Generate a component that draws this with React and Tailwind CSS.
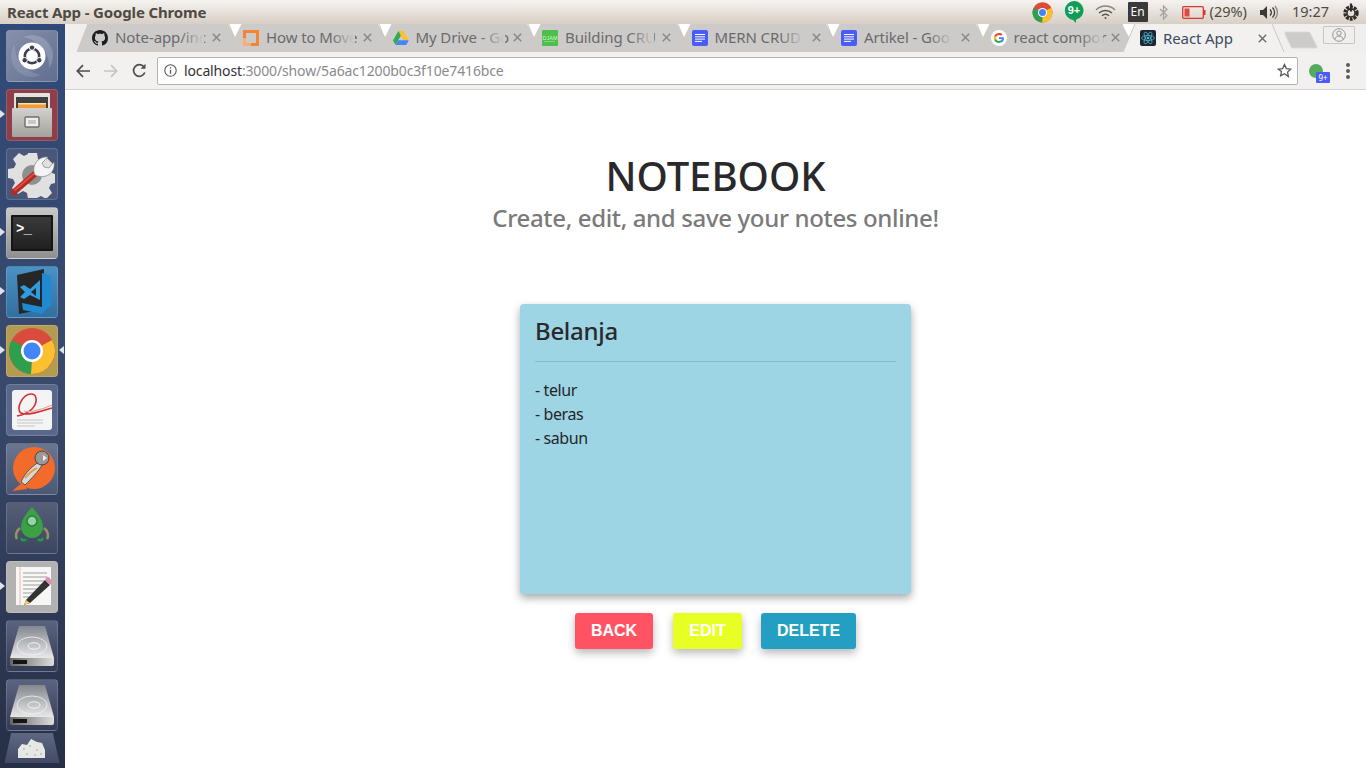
import React from "react";

const UI_FONT = "font-['Noto_Sans','Open_Sans',sans-serif]";

const GithubIcon = () => (
  <svg width="16" height="16" viewBox="0 0 16 16" fill="#1b1f23">
    <path d="M8 0C3.58 0 0 3.58 0 8c0 3.54 2.29 6.53 5.47 7.59.4.07.55-.17.55-.38 0-.19-.01-.82-.01-1.49-2.01.37-2.53-.49-2.69-.94-.09-.23-.48-.94-.82-1.13-.28-.15-.68-.52-.01-.53.63-.01 1.08.58 1.23.82.72 1.21 1.87.87 2.33.66.07-.52.28-.87.51-1.07-1.78-.2-3.64-.89-3.64-3.95 0-.87.31-1.59.82-2.15-.08-.2-.36-1.02.08-2.12 0 0 .67-.21 2.2.82.64-.18 1.32-.27 2-.27s1.36.09 2 .27c1.53-1.04 2.2-.82 2.2-.82.44 1.1.16 1.92.08 2.12.51.56.82 1.27.82 2.15 0 3.07-1.87 3.75-3.65 3.95.29.25.54.73.54 1.48 0 1.07-.01 1.93-.01 2.2 0 .21.15.46.55.38A8.01 8.01 0 0 0 16 8c0-4.42-3.58-8-8-8z" />
  </svg>
);

const OrangeIcon = () => (
  <svg width="16" height="16" viewBox="0 0 16 16">
    <rect width="16" height="16" fill="#f58536" />
    <rect x="3" y="3" width="10" height="10" fill="#cdcbc9" />
    <rect x="0" y="8" width="3" height="8" fill="#f8ae76" />
    <rect x="0" y="13" width="8" height="3" fill="#f8ae76" />
  </svg>
);

const DriveIcon = () => (
  <svg width="16" height="16" viewBox="0 0 16 16">
    <path d="M5.4 1h5.2l5.2 9.2h-5.2z" fill="#fbc02d" />
    <path d="M5.4 1 0 10.4l2.6 4.5 5.3-9.4z" fill="#34a853" />
    <path d="M2.6 14.9h10.6l2.6-4.7H5.3z" fill="#4285f4" />
  </svg>
);

const DjamIcon = () => (
  <svg width="16" height="16" viewBox="0 0 16 16">
    <rect width="16" height="16" rx="1" fill="#4cc04a" />
    <text x="8" y="9.5" textAnchor="middle" fontSize="5.5" fill="#d5f5c8" fontFamily="Liberation Sans, sans-serif">DJAM</text>
    <path d="M2 12h1l1-1 1 1 1-1 1 1 1-1 1 1 1-1 1 1 1-1 1 1" stroke="#9fe8a0" strokeWidth=".6" fill="none" />
  </svg>
);

const DocsIcon = () => (
  <svg width="16" height="16" viewBox="0 0 16 16">
    <rect width="16" height="16" rx="2" fill="#4a5cf7" />
    <path d="M3 4.5h10M3 6.8h10M3 9.1h10M3 11.4h7" stroke="#fff" strokeWidth="1" />
  </svg>
);

const GoogleIcon = () => (
  <svg width="16" height="16" viewBox="0 0 16 16">
    <circle cx="8" cy="8" r="8" fill="#fff" />
    <path d="M12.9 8.2c0-.4 0-.7-.1-1H8v1.9h2.8c-.1.6-.5 1.2-1 1.5v1.3h1.6c1-.9 1.5-2.2 1.5-3.7z" fill="#4285f4" />
    <path d="M8 13c1.4 0 2.5-.5 3.4-1.2l-1.6-1.3c-.5.3-1 .5-1.8.5-1.3 0-2.5-.9-2.9-2.1H3.4v1.3C4.2 11.9 6 13 8 13z" fill="#34a853" />
    <path d="M5.1 8.9c-.2-.6-.2-1.2 0-1.8V5.800H3.4c-.7 1.4-.7 3 0 4.4z" fill="#fbbc05" />
    <path d="M8 5c.8 0 1.5.3 2 .8l1.5-1.5C10.6 3.500 9.4 3 8 3 6 3 4.200 4.100 3.400 5.800l1.700 1.300C5.500 5.900 6.700 5 8 5z" fill="#ea4335" />
  </svg>
);

const ReactIcon = () => (
  <svg width="16" height="16" viewBox="0 0 16 16">
    <rect width="16" height="16" rx="2" fill="#1c2530" />
    <g stroke="#53c1de" strokeWidth=".7" fill="none">
      <ellipse cx="8" cy="8" rx="6.5" ry="2.5" />
      <ellipse cx="8" cy="8" rx="6.5" ry="2.5" transform="rotate(60 8 8)" />
      <ellipse cx="8" cy="8" rx="6.5" ry="2.5" transform="rotate(120 8 8)" />
    </g>
    <circle cx="8" cy="8" r="1.3" fill="#53c1de" />
  </svg>
);

// titles are written as far as the reference shows them, the rest fades out
const TABS = [
  { title: "Note-app/inc", icon: <GithubIcon />, first: true },
  { title: "How to Move", icon: <OrangeIcon /> },
  { title: "My Drive - Go", icon: <DriveIcon /> },
  { title: "Building CRU", icon: <DjamIcon /> },
  { title: "MERN CRUD", icon: <DocsIcon /> },
  { title: "Artikel - Goo", icon: <DocsIcon /> },
  { title: "react compor", icon: <GoogleIcon /> },
];

const CloseX = ({ color }) => (
  <svg className="ml-[8px] shrink-0" width="9" height="9" viewBox="0 0 9 9" stroke={color} strokeWidth="1.5">
    <path d="M.8.8l7.4 7.4M8.2.8.8 8.2" />
  </svg>
);

const TabNotch = () => (
  <svg className="absolute left-[-10px] top-0" width="14" height="28" viewBox="0 0 14 28">
    <path d="M0 0h13.5L7 13z" fill="#fff" />
    <path d="M1 0 12 27.5M7 13l5 14.5" stroke="#d3c8bb" fill="none" />
  </svg>
);

const Tab = ({ title, icon, first }) => (
  <div className={`relative shrink-0 h-[28px] bg-[#cdcbc9] border-b border-[#d3c8bb] flex items-center ${first ? "w-[151px]" : "w-[149.5px]"}`}>
    {first ? (
      <svg className="absolute left-[-10px] top-0" width="12" height="28" viewBox="0 0 12 28">
        <path d="M11 0 0 28h12V0z" fill="#cdcbc9" />
        <path d="M11 0 0 28" stroke="#d3c8bb" fill="none" />
      </svg>
    ) : (
      <TabNotch />
    )}
    <div className="ml-[5px] w-4 h-4 shrink-0 flex">{icon}</div>
    <div className="relative ml-[7px] w-[89px] whitespace-nowrap text-[15px] tracking-[-0.1px] text-[#6a6a6c]">
      {title}
      <div className="absolute right-0 top-0 bottom-0 w-[24px] bg-gradient-to-r from-[#cdcbc900] to-[#cdcbc9]" />
    </div>
    <CloseX color="#88888a" />
  </div>
);

const TitleBar = () => (
  <div className="h-[24px] shrink-0 flex items-center bg-gradient-to-b from-[#f5f3f1] to-[#d8cfc5]">
    <span className="ml-[7px] text-[15px] font-bold text-[#4f4a44] tracking-[-0.15px]">React App - Google Chrome</span>
    <div className="ml-auto flex items-center">
      <svg className="mr-[11px]" width="21" height="21" viewBox="0 0 48 48">
        <circle cx="24" cy="24" r="23" fill="#dd4b39" />
        <path d="M24 24 44 13a23 23 0 0 1-21 34z" fill="#fbc02d" />
        <path d="M24 24 23 47A23 23 0 0 1 4 13z" fill="#2e9e4f" />
        <path d="M24 1a23 23 0 0 1 20 12H24L4 13A23 23 0 0 1 24 1z" fill="#dd4b39" />
        <circle cx="24" cy="24" r="10.5" fill="#fff" />
        <circle cx="24" cy="24" r="8" fill="#4285f4" />
      </svg>
      <svg className="mr-[11px]" width="20" height="24" viewBox="0 0 20 24">
        <path d="M10 1a9.5 9.5 0 0 1 2 18.8V23l-3-3.1A9.5 9.5 0 0 1 10 1z" fill="#0f9d58" />
        <text x="10" y="14" textAnchor="middle" fontSize="11" fontWeight="700" fill="#fff" fontFamily="Liberation Sans, sans-serif">9+</text>
      </svg>
      <svg className="mr-[12px]" width="21" height="15" viewBox="0 0 21 15" fill="none" stroke="#55514c" strokeWidth="1.5">
        <path d="M1 5a13.5 13.5 0 0 1 19 0" stroke="#8b8680" />
        <path d="M4 8a9.5 9.5 0 0 1 13 0" />
        <path d="M7 10.8a5 5 0 0 1 7 0" />
        <circle cx="10.5" cy="13" r="1" fill="#55514c" stroke="none" />
      </svg>
      <div className="w-[20px] h-[20px] mr-[11px] bg-[#3a3a3a] text-white text-[12px] leading-[20px] text-center rounded-[1px]">En</div>
      <svg className="mr-[14px]" width="9" height="15" viewBox="0 0 9 15" fill="none" stroke="#a5a19c" strokeWidth="1.2">
        <path d="M1 4l7 6.5-3.5 3.5V1L8 4.5 1 11" />
      </svg>
      <svg className="mr-[4px]" width="24" height="13" viewBox="0 0 24 13">
        <rect x=".7" y=".7" width="20.6" height="11.6" rx="1" fill="none" stroke="#d9362c" strokeWidth="1.3" />
        <rect x="2.5" y="2.5" width="5" height="8" fill="#e2473b" />
        <rect x="21.5" y="4" width="2" height="5" fill="#d9362c" />
      </svg>
      <span className="text-[14.5px] text-[#4f4a44] mr-[12px]">(29%)</span>
      <svg className="mr-[13px]" width="20" height="15" viewBox="0 0 20 15" fill="none" stroke="#3c3833" strokeWidth="1.3">
        <path d="M1 5h3l4-4v13l-4-4H1z" fill="#3c3833" stroke="none" />
        <path d="M11 4.5a4 4 0 0 1 0 6" />
        <path d="M13.5 2.5a7 7 0 0 1 0 10" />
        <path d="M16 1a10 10 0 0 1 0 13" stroke="#8b8680" />
      </svg>
      <span className="text-[14.5px] text-[#4f4a44] mr-[13px]">19:27</span>
      <svg className="mr-[6px]" width="18" height="18" viewBox="0 0 18 18" fill="none" stroke="#2f2b27">
        <circle cx="9" cy="10" r="6" strokeDasharray="2.8 1" strokeWidth="3.4" />
        <circle cx="9" cy="10" r="4" strokeWidth="1.4" />
        <path d="M9 .5v8" strokeWidth="2.2" />
      </svg>
    </div>
  </div>
);

const TabStrip = () => (
  <div className="h-[28px] shrink-0 flex bg-[#f1efed]">
    <div className="w-[22px] shrink-0" />
    {TABS.map((t) => (
      <Tab key={t.title} {...t} />
    ))}
    <div className="relative w-[137px] shrink-0 h-[28px] bg-[#f2f1ef] flex items-center">
      <svg className="absolute left-[-12px] top-0" width="13" height="28" viewBox="0 0 13 28">
        <path d="M-1 0h13.5L6 13z" fill="#fff" />
        <path d="M12 0 0 28h13V0z" fill="#f2f1ef" />
        <path d="M12 0 0 28" stroke="#d3c8bb" fill="none" />
      </svg>
      <div className="ml-[5px] w-4 h-4 shrink-0 flex"><ReactIcon /></div>
      <div className="ml-[7px] w-[87px] whitespace-nowrap text-[15px] tracking-[-0.1px] text-[#3d4b63]">React App</div>
      <CloseX color="#6f6f70" />
      <svg className="absolute right-[-13px] top-0" width="14" height="28" viewBox="0 0 14 28">
        <path d="M0 0h1l12 28H0z" fill="#f2f1ef" />
        <path d="M1 0 13 28" stroke="#d3c8bb" fill="none" />
      </svg>
    </div>
    <div className="ml-[11px] mt-[7px] flex">
      <svg width="35" height="18" viewBox="0 0 35 18">
        <path d="M3 1h22c1 0 2 .5 2.5 1.500L34 16c.3.7 0 1-.7 1H10c-1 0-1.500-.3-2-1L2 3c-.4-1 0-2 1-2z" fill="#cdcbc9" stroke="#dcd9d5" />
      </svg>
      <div className="ml-[5px] mt-[-5px] w-[32px] h-[18px] border border-[#c9c5c0] rounded-[1px] flex items-center justify-center">
        <svg width="14" height="14" viewBox="0 0 14 14" fill="none" stroke="#8d8a86" strokeWidth="0.9">
          <circle cx="7" cy="7" r="6.3" />
          <circle cx="7" cy="5.2" r="2.2" />
          <path d="M2.8 11.5c.5-2.6 2-3.3 4.2-3.3s3.700.7 4.200 3.300" />
        </svg>
      </div>
    </div>
  </div>
);

const Toolbar = () => (
  <div className="h-[38px] shrink-0 flex items-center bg-[#f2f1ef] border-b border-[#d5d3d1]">
    <svg className="ml-[11px]" width="14" height="14" viewBox="0 0 14 14" fill="none" stroke="#4e4e50" strokeWidth="1.7">
      <path d="M14 7H1.5M7 1.2 1.3 7 7 12.8" />
    </svg>
    <svg className="ml-[14px]" width="14" height="14" viewBox="0 0 14 14" fill="none" stroke="#c4c4c4" strokeWidth="1.7">
      <path d="M0 7h12.5M7 1.2 12.7 7 7 12.8" />
    </svg>
    <svg className="ml-[14px]" width="15" height="15" viewBox="0 0 15 15" fill="none" stroke="#4e4e50" strokeWidth="1.7">
      <path d="M12.8 9.5A5.8 5.8 0 1 1 12 4" />
      <path d="M13.5 .8v5h-5z" fill="#4e4e50" stroke="none" />
    </svg>
    <div className="ml-[10px] w-[1141px] h-[28px] bg-white border border-[#b5b3b1] rounded-[2px] flex items-center">
      <svg className="ml-[6px]" width="13" height="13" viewBox="0 0 13 13" fill="none" stroke="#5a5a5c" strokeWidth="1.1">
        <circle cx="6.5" cy="6.5" r="5.7" />
        <path d="M6.5 5.7v4M6.5 3.2v1.4" strokeWidth="1.3" />
      </svg>
      <span className="ml-[7px] text-[14px] tracking-[-0.14px] text-[#333]">
        localhost<span className="text-[#8a8a8a]">:3000/show/5a6ac1200b0c3f10e7416bce</span>
      </span>
      <svg className="ml-auto mr-[5px]" width="15" height="15" viewBox="0 0 24 24" fill="none" stroke="#555" strokeWidth="2">
        <path d="m12 2.5 3 6.4 7 .9-5.1 4.8 1.3 7L12 17.2l-6.2 3.4 1.3-7L2 9.8l7-.9z" />
      </svg>
    </div>
    <div className="relative ml-[11px] w-[14px] h-[14px] rounded-full bg-[#55ab5d]">
      <div className="absolute left-[7px] top-[8px] w-[14px] h-[11px] bg-[#4a5cf7] text-white text-[8px] leading-[11px] text-center rounded-[1px]">9+</div>
    </div>
    <div className="ml-[23px] flex flex-col gap-[2px]">
      <div className="w-1 h-1 rounded-full bg-[#5a5a5c]" />
      <div className="w-1 h-1 rounded-full bg-[#5a5a5c]" />
      <div className="w-1 h-1 rounded-full bg-[#5a5a5c]" />
    </div>
  </div>
);

const Tile = ({ bg, pip, pipRight, children }) => (
  <div className={`relative w-[52px] h-[52px] shrink-0 rounded-[4px] border border-white/15 flex items-center justify-center ${bg}`}>
    {pip && (
      <div className="absolute left-[-7px] top-[20px] w-0 h-0 border-y-[4px] border-y-transparent border-l-[5px] border-l-[#dfe3ea]" />
    )}
    {pipRight && (
      <div className="absolute right-[-7px] top-[20px] w-0 h-0 border-y-[4px] border-y-transparent border-r-[5px] border-r-[#dfe3ea]" />
    )}
    {children}
  </div>
);

const DiskIcon = ({ id }) => (
  <svg width="48" height="42" viewBox="0 0 48 42">
    <defs>
      <linearGradient id={`top-${id}`} x1="0" y1="0" x2="0" y2="1">
        <stop offset="0" stopColor="#84878f" />
        <stop offset="1" stopColor="#e8e8e8" />
      </linearGradient>
      <linearGradient id={`front-${id}`} x1="0" y1="0" x2="1" y2="0">
        <stop offset="0" stopColor="#666" />
        <stop offset="1" stopColor="#dedede" />
      </linearGradient>
    </defs>
    <path d="M11 1h26l9 32H2z" fill={`url(#top-${id})`} />
    <path d="M2 33h44v6a2 2 0 0 1-2 2H4a2 2 0 0 1-2-2z" fill={`url(#front-${id})`} />
    <rect x="5" y="35" width="14" height="4" fill="#141414" />
    <ellipse cx="24" cy="21" rx="15" ry="9" fill="none" stroke="#f4f4f4" strokeWidth=".8" />
    <ellipse cx="26" cy="21" rx="6" ry="3.2" fill="none" stroke="#f4f4f4" />
  </svg>
);

const Launcher = () => (
  <div className="w-[65px] shrink-0 bg-gradient-to-b from-[#2f4a78] via-[#39496b] to-[#262f46] flex flex-col items-center pr-[1px] pt-[6px] gap-[7px] overflow-hidden">
    <Tile bg="bg-gradient-to-br from-[#8791ab] to-[#626e90]">
      <svg width="46" height="46" viewBox="0 0 46 46">
        <path d="M23 2a21 21 0 0 1 21 21c0 5-2 9-4 12 1-15-8-27-26-31 3-1 6-2 9-2z" fill="#fff" fillOpacity=".18" />
        <path d="M23 44A21 21 0 0 1 2 23c0-5 2-9 4-12-1 15 8 27 26 31-3 1-6 2-9 2z" fill="#fff" fillOpacity=".12" />
        <circle cx="23" cy="23" r="13.5" fill="#fff" />
        <circle cx="23" cy="23" r="7.2" fill="none" stroke="#3a3f50" strokeWidth="2.6" />
        <circle cx="23" cy="14.6" r="2.7" fill="#3a3f50" stroke="#fff" />
        <circle cx="15.7" cy="27.2" r="2.7" fill="#3a3f50" stroke="#fff" />
        <circle cx="30.3" cy="27.2" r="2.7" fill="#3a3f50" stroke="#fff" />
      </svg>
    </Tile>
    <Tile pip bg="bg-[#8f3f4a]">
      <svg width="44" height="46" viewBox="0 0 44 46">
        <defs>
          <linearGradient id="cabinet" x1="0" y1="0" x2="0" y2="1">
            <stop offset="0" stopColor="#d2d1cd" />
            <stop offset="1" stopColor="#a3a29e" />
          </linearGradient>
        </defs>
        <rect x="4" y="1" width="36" height="20" rx="1" fill="#e2e2de" />
        <rect x="6" y="5" width="32" height="13" fill="#3f3f3f" />
        <rect x="8" y="11" width="28" height="5" fill="#ef9a3d" />
        <rect x="8" y="11" width="28" height="1.5" fill="#fbe0a8" />
        <rect x="2" y="16" width="40" height="29" rx="1" fill="url(#cabinet)" />
        <rect x="15" y="25" width="14" height="10" rx="1" fill="#eee" stroke="#6f6f6f" strokeWidth="1.4" />
        <rect x="18" y="28" width="8" height="4" fill="#c8c8c8" />
      </svg>
    </Tile>
    <Tile bg="bg-[#49587a]">
      <svg width="48" height="48" viewBox="0 0 48 48">
        <path d="M20 3h9l1 6 4 2 5-3 6 6-3 5 2 4 3 1v9l-4 1-2 4 3 5-6 6-5-3-4 2-1 1H20l-1-6-4-2-5 3-6-6 3-5-2-4-5-1v-9l6-1 2-4-3-5 6-6 5 3 4-2z" fill="#e0e0e0" />
        <circle cx="24" cy="25" r="10" fill="#8f8f8f" />
        <path d="M6 42 28 23" stroke="#b52a22" strokeWidth="6" strokeLinecap="round" />
        <path d="M7 40 28 22" stroke="#de4f42" strokeWidth="1.8" strokeLinecap="round" />
        <path d="M27 25c-4-8 2-19 13-18l-6 6 2 4 5 1 5-6c2 11-9 18-19 13z" fill="#f4f4f4" stroke="#7f7f7f" strokeWidth=".7" />
      </svg>
    </Tile>
    <Tile pip bg="bg-gradient-to-b from-[#c8c8c8] to-[#8f8f8f]">
      <div className="w-[42px] h-[36px] bg-gradient-to-b from-[#3a3a3a] to-[#202020] border-2 border-[#151515] rounded-[1px] relative">
        <span className="absolute left-[3px] top-[2px] text-[14px] leading-[20px] text-white font-['Liberation_Mono',monospace] font-bold tracking-[-1px]">&gt;_</span>
      </div>
    </Tile>
    <Tile pip bg="bg-gradient-to-b from-[#4a91c4] to-[#336f9f]">
      <svg width="42" height="48" viewBox="0 0 42 48">
        <path d="M6 7 33 1v40L8 46z" fill="#262626" />
        <path d="M31 5l9 3v30l-9 4z" fill="#1f8ad2" />
        <path d="M11 35 36 40 31 46 12 42z" fill="#1f8ad2" />
        <path d="M29 12 19 21l-6-4-4 2 5 5-5 5 4 2 6-4 10 5z" fill="#2f9be0" />
        <path d="m25 20-5 4 5 4z" fill="#262626" />
      </svg>
    </Tile>
    <Tile pip pipRight bg="bg-[#b39c52]">
      <svg width="48" height="48" viewBox="0 0 48 48">
        <circle cx="24" cy="24" r="23" fill="#d94b3d" />
        <path d="M24 24 44 13a23 23 0 0 1-21 34z" fill="#fbc02d" />
        <path d="M24 24 23 47A23 23 0 0 1 4 13z" fill="#2e9e4f" />
        <circle cx="24" cy="24" r="11" fill="#fff" />
        <circle cx="24" cy="24" r="8.5" fill="#4285f4" />
      </svg>
    </Tile>
    <Tile bg="bg-[#59678a]">
      <svg width="42" height="42" viewBox="0 0 42 42">
        <rect x="1" y="1" width="40" height="40" rx="3" fill="#f4f4f4" />
        <path d="M41 19C28 23 15 27 10 24 4 20 12 4 21 5c6 1 5 10 0 15-4 4-9 6-15 7" fill="none" stroke="#d03038" strokeWidth="1.6" />
        <path d="M41 16C30 21 18 24 13 22" fill="none" stroke="#e8a0a0" strokeWidth="1.2" />
        <path d="M6 31h26M6 34h26M6 37h18" stroke="#c5c5c5" />
      </svg>
    </Tile>
    <Tile bg="bg-gradient-to-b from-[#6a7590] to-[#4c5875]">
      <svg width="46" height="46" viewBox="0 0 46 46">
        <circle cx="25" cy="22" r="21" fill="#f26b2a" />
        <path d="M3 45 14 36 18 43z" fill="#f26b2a" />
        <path d="M12 36C16 26 25 19 30 16l3 3c-3 6-11 14-17 20z" fill="#d8d8d8" stroke="#555" strokeWidth="1" />
        <path d="M16 32c4-5 8-8 12-10" stroke="#e8a040" strokeWidth="2" fill="none" />
        <circle cx="33" cy="12" r="7" fill="#9a9a9a" stroke="#444" />
        <path d="M34 9l4 3-4 3z" fill="#eee" />
      </svg>
    </Tile>
    <Tile bg="bg-gradient-to-b from-[#565f78] to-[#3d4660]">
      <svg width="42" height="44" viewBox="0 0 42 44">
        <path d="M21 1c7 8 11 14 11 20a11 11 0 0 1-22 0c0-6 4-12 11-20z" fill="#3aa245" />
        <circle cx="21" cy="15" r="5" fill="#8fd5a8" stroke="#2a7b3a" strokeWidth="1.5" />
        <path d="M9 22c-4 3-5 8-3 11M33 22c4 3 5 8 3 11" stroke="#9b9060" strokeWidth="2.5" fill="none" />
        <path d="M10 32c1 3 4 3 5 1M32 32c-1 3-4 3-5 1" stroke="#1f9d45" strokeWidth="2.5" fill="none" />
      </svg>
    </Tile>
    <Tile pip bg="bg-[#b2b2b2]">
      <svg width="44" height="44" viewBox="0 0 44 44">
        <rect x="6" y="2" width="35" height="38" fill="#f7f7f5" />
        <path d="M10 2v38" stroke="#e59a9a" strokeWidth=".7" />
        <path d="M13 8h24M13 12h24M13 16h24M13 20h20M13 24h14M13 28h12M13 32h10" stroke="#777" strokeWidth=".7" />
        <path d="M16 35 35 15l5 5-20 18-6 2z" fill="#333" />
        <path d="M35 15l2-3c2-1 4 3 5 5l-2 3z" fill="#e58ab3" />
        <path d="M16 35l4 3-6 2z" fill="#f0d060" />
      </svg>
    </Tile>
    <Tile bg="bg-gradient-to-b from-[#5a6380] to-[#343c54]"><DiskIcon id="a" /></Tile>
    <Tile bg="bg-gradient-to-b from-[#5a6380] to-[#343c54]"><DiskIcon id="b" /></Tile>
    <div className="w-[55px] h-[30px] shrink-0 mt-[-5px] [clip-path:polygon(12%_0,88%_0,100%_100%,0_100%)] bg-gradient-to-b from-[#5e6883] to-[#414b66] flex items-center justify-center">
      <svg width="34" height="24" viewBox="0 0 34 24">
        <path d="M3 22v-9l4-5 5 1 4-6 6 3 5 1 3 7v8z" fill="#e6e8e4" />
        <path d="M8 13h2M14 10h2M21 14h2M11 18h2M19 19h2M25 18h2" stroke="#a0a6a2" />
      </svg>
    </div>
  </div>
);

const Btn = ({ className, text }) => (
  <button className={`h-[36px] rounded-[3px] font-['Liberation_Sans',Arial,sans-serif] font-bold text-[16px] text-white shadow-[0_4px_8px_rgba(0,0,0,0.28)] ${className}`}>
    {text}
  </button>
);

const Page = () => (
  <div className="flex-1 min-w-0 bg-white flex flex-col items-center pt-[59px]">
    <h1 className="text-[40px] leading-[54px] font-medium text-[#29292b]">NOTEBOOK</h1>
    <p className="mt-[-1px] text-[24px] leading-[32px] font-medium text-[#7a7a7a] tracking-[-0.35px]">
      Create, edit, and save your notes online!
    </p>
    <div className="mt-[70px] w-[391px] h-[290px] bg-[#9dd5e5] rounded-[4px] shadow-[0_4px_9px_rgba(0,0,0,0.35)] px-[15px]">
      <h2 className="mt-[10px] text-[24px] leading-[34px] font-medium text-[#2a2a2c] tracking-[-0.3px]">Belanja</h2>
      <hr className="mt-[13px] border-t border-[#86bccd]" />
      <div className="mt-[16px] text-[16px] leading-[24px] text-[#26262a] tracking-[-0.4px]">
        <div>- telur</div>
        <div>- beras</div>
        <div>- sabun</div>
      </div>
    </div>
    <div className="mt-[19px] flex">
      <Btn className="w-[78px] bg-[#ff5364]" text="BACK" />
      <Btn className="ml-[20px] w-[69px] bg-[#e8ff26]" text="EDIT" />
      <Btn className="ml-[19px] w-[95px] bg-[#249fc1]" text="DELETE" />
    </div>
  </div>
);

const App = () => (
  <div className={`w-[1366px] h-[768px] overflow-hidden flex flex-col ${UI_FONT}`}>
    <TitleBar />
    <div className="flex-1 min-h-0 flex">
      <Launcher />
      <div className="flex-1 min-w-0 flex flex-col">
        <TabStrip />
        <Toolbar />
        <Page />
      </div>
    </div>
  </div>
);

export default App;
